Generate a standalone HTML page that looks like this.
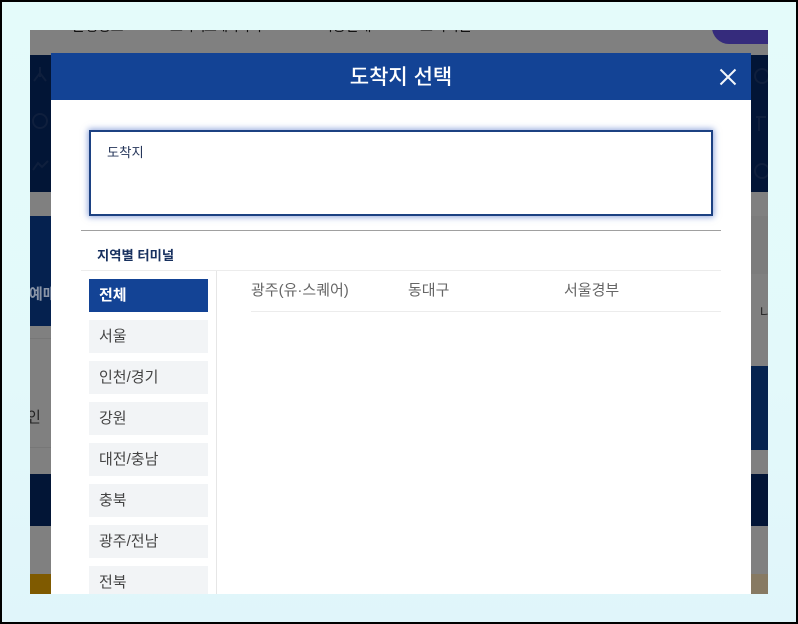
<!DOCTYPE html>
<html lang="ko">
<head>
<meta charset="utf-8">
<style>
html,body{margin:0;padding:0}
body{width:798px;height:624px;overflow:hidden;position:relative;font-family:"Liberation Sans","Noto Sans CJK KR",sans-serif}
.a{position:absolute}
.t{position:absolute;white-space:nowrap;line-height:1}
.menu{position:absolute;left:89px;width:119px;height:33px;background:#f2f4f6;color:#444;font-size:15px;line-height:33px;text-indent:10px;white-space:nowrap}
</style>
</head>
<body>
<div class="a" style="left:0;top:0;width:798px;height:624px;background:linear-gradient(180deg,#e4fbfa 0%,#e3f9fa 60%,#e0f5fa 100%)"></div>

<div class="a" style="left:30px;top:30px;width:738px;height:564px;background:#808080;overflow:hidden">
  <div class="t" style="left:42px;top:-11px;font-size:14px;color:#111">운행정보</div>
  <div class="t" style="left:140px;top:-11px;font-size:14px;letter-spacing:-1.600px;color:#111">고속버스예약하기</div>
  <div class="t" style="left:290px;top:-11px;font-size:14px;color:#111">이용안내</div>
  <div class="t" style="left:390px;top:-11px;font-size:14px;color:#111">고객지원</div>
  <div class="a" style="left:682px;top:-20px;width:80px;height:34px;background:#352b7c;border-radius:17px"></div>
  <div class="a" style="left:0;top:25px;width:738px;height:137px;background:#021536"></div>
  <svg class="a" style="left:0;top:25px" width="21" height="137" viewBox="0 0 21 137" fill="none" stroke="#0f1f3d" stroke-width="2"><path d="M4 26L10 18L16 26M10 12V22"/><circle cx="10" cy="66" r="7"/><path d="M3 115L8 108L12 112L18 106"/></svg>
  <svg class="a" style="left:721px;top:25px" width="17" height="137" viewBox="0 0 17 137" fill="none" stroke="#0f1f3d" stroke-width="2"><circle cx="11" cy="21" r="7"/><path d="M5 62H15M8 62V76"/><circle cx="11" cy="116" r="7"/></svg>
  <div class="a" style="left:0;top:186px;width:738px;height:110px;background:#05214f"></div>
  <div class="a" style="left:0;top:308px;width:21px;height:1px;background:#777"></div>
  <div class="t" style="left:-1px;top:257px;font-size:15px;font-weight:bold;color:#8a94a6">예매</div>
  <div class="t" style="left:-3px;top:380px;font-size:15px;color:#222">인</div>
  <div class="a" style="left:0;top:417px;width:21px;height:1px;background:#777"></div>
  <div class="a" style="left:721px;top:186px;width:17px;height:150px;background:#808080"></div>
  <div class="a" style="left:721px;top:186px;width:17px;height:58px;background:#7c7c7c"></div>
  <div class="t" style="left:730px;top:276px;font-size:13px;color:#222">나</div>
  <div class="a" style="left:721px;top:336px;width:17px;height:84px;background:#05234f"></div>
  <div class="a" style="left:0;top:444px;width:738px;height:52px;background:#021536"></div>
  <div class="a" style="left:0;top:544px;width:21px;height:20px;background:#7f5a00"></div>
  <div class="a" style="left:721px;top:544px;width:17px;height:20px;background:#877a63"></div>
</div>

<div class="a" style="left:51px;top:53px;width:700px;height:541px;background:#fff;overflow:hidden">
  <div class="a" style="left:0;top:0;width:700px;height:47px;background:#134395"></div>
  <div class="t" style="left:0;top:14px;width:700px;text-align:center;font-size:21px;font-weight:500;color:#fff">도착지 선택</div>
  <svg class="a" style="left:667px;top:14px" width="20" height="20" viewBox="0 0 20 20"><path d="M2.500 2.500L17.500 17.500M17.500 2.500L2.500 17.500" stroke="#f2f6fb" stroke-width="2" fill="none"/></svg>

  <div class="a" style="left:38px;top:77px;width:620px;height:82px;border:2px solid #1c4182;box-shadow:0 0 6px 1px rgba(50,90,190,.55);background:#fff"></div>
  <div class="t" style="left:56px;top:93px;font-size:13.300px;color:#26365a">도착지</div>

  <div class="a" style="left:30px;top:177px;width:640px;height:1px;background:#a0a0a0"></div>
  <div class="t" style="left:46px;top:196px;font-size:13.300px;font-weight:bold;color:#17305f">지역별 터미널</div>
  <div class="a" style="left:30px;top:217px;width:640px;height:1px;background:#ececec"></div>
  <div class="a" style="left:165px;top:218px;width:1px;height:323px;background:#e6e6e6"></div>
</div>

<div class="menu" style="top:279px;background:#134395;color:#fff;font-weight:bold">전체</div>
<div class="menu" style="top:320px">서울</div>
<div class="menu" style="top:361px">인천/경기</div>
<div class="menu" style="top:402px">강원</div>
<div class="menu" style="top:443px">대전/충남</div>
<div class="menu" style="top:484px">충북</div>
<div class="menu" style="top:525px">광주/전남</div>
<div class="a" style="left:89px;top:566px;width:119px;height:28px;overflow:hidden"><div class="menu" style="left:0;top:0">전북</div></div>

<div class="t" style="left:251px;top:283px;font-size:15px;color:#666">광주(유·스퀘어)</div>
<div class="t" style="left:408px;top:283px;font-size:15px;color:#666">동대구</div>
<div class="t" style="left:564px;top:283px;font-size:15px;color:#666">서울경부</div>
<div class="a" style="left:251px;top:311px;width:470px;height:1px;background:#ececec"></div>

<div class="a" style="left:0;top:0;width:794px;height:620px;border:2px solid #000"></div>
</body>
</html>
